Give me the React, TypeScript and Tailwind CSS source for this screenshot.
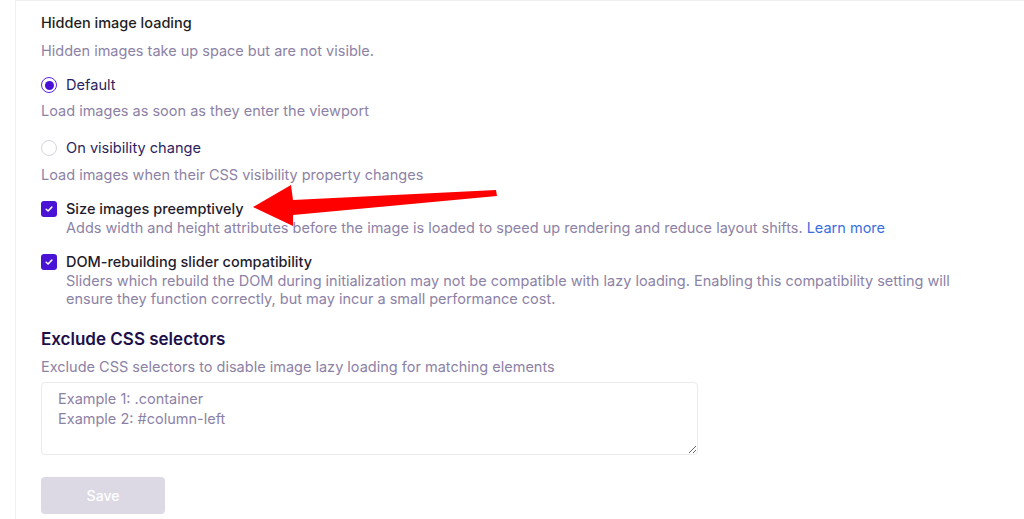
import React from 'react'

const desc = 'text-[14.5px] leading-[20px] text-[#8c82a6]'

function Radio({ checked }: { checked?: boolean }) {
  return checked ? (
    <span className="flex h-4 w-4 shrink-0 items-center justify-center rounded-full border-[1.5px] border-[#5a24e6] bg-white">
      <span className="h-[9px] w-[9px] rounded-full bg-[#4a0fd6]" />
    </span>
  ) : (
    <span className="h-4 w-4 shrink-0 rounded-full border border-[#d6d2de] bg-white" />
  )
}

function Checkbox() {
  return (
    <span className="flex h-4 w-4 shrink-0 items-center justify-center rounded-[3px] bg-[#4a12d4]">
      <svg viewBox="0 0 16 16" className="h-[10px] w-[10px]" fill="none" stroke="white" strokeWidth="2.4" strokeLinecap="round" strokeLinejoin="round">
        <path d="M3.5 8.5l3 2.8 6-6.3" />
      </svg>
    </span>
  )
}

export default function App() {
  return (
    <div className="relative h-[519px] w-[1024px] overflow-hidden bg-white font-['Inter',sans-serif]">
      <div className="ml-[15px] h-full border-l border-t border-[#efeff2] pl-[25px] pt-[12px]">
        <div className="flex flex-col items-start">
          <h3 className="text-[14.5px] font-medium leading-[20px] text-[#1d1d22]">Hidden image loading</h3>
          <p className={`mt-[8px] ${desc}`}>Hidden images take up space but are not visible.</p>

          <label className="mt-[14px] flex items-center gap-[9px]">
            <Radio checked />
            <span className="text-[14.6px] leading-[20px] text-[#2c1f5e]">Default</span>
          </label>
          <p className={`mt-[6px] ${desc}`}>Load images as soon as they enter the viewport</p>

          <label className="mt-[17px] flex items-center gap-[9px]">
            <Radio />
            <span className="text-[14.6px] leading-[20px] text-[#2c1f5e]">On visibility change</span>
          </label>
          <p className={`mt-[7px] ${desc}`}>Load images when their CSS visibility property changes</p>

          <div className="mt-[14px] flex items-start gap-[9px]">
            <span className="pt-[2px]">
              <Checkbox />
            </span>
            <div>
              <p className="text-[14.5px] font-medium leading-[20px] text-[#1e1b2c]">Size images preemptively</p>
              <p className="text-[14.5px] leading-[18px] text-[#8c82a6]">
                Adds width and height attributes before the image is loaded to speed up rendering and reduce layout shifts.{' '}
                <a className="text-[#3b6ee0]">Learn more</a>
              </p>
            </div>
          </div>

          <div className="mt-[15px] flex items-start gap-[9px]">
            <span className="pt-[2px]">
              <Checkbox />
            </span>
            <div className="w-[900px]">
              <p className="text-[14.5px] font-medium leading-[20px] text-[#1e1b2c]">DOM-rebuilding slider compatibility</p>
              <p className="text-[14.5px] leading-[18px] text-[#8c82a6]">
                Sliders which rebuild the DOM during initialization may not be compatible with lazy loading. Enabling this compatibility setting will ensure they function correctly, but may incur a small performance cost.
              </p>
            </div>
          </div>

          <h2 className="mt-[19px] text-[17px] font-semibold leading-[24px] text-[#1c0f4a]">Exclude CSS selectors</h2>
          <p className={`mt-[6px] ${desc}`}>Exclude CSS selectors to disable image lazy loading for matching elements</p>

          <textarea
            className="mt-[5px] h-[73px] w-[657px] rounded-[4px] border border-[#ebe9ef] px-[16px] pt-[6px] text-[14.5px] leading-[20px] text-[#2c1f5e] outline-none placeholder:text-[#8c82a6]"
            placeholder={'Example 1: .container\nExample 2: #column-left'}
          />

          <button className="mt-[22px] h-[37px] w-[124px] rounded-[4px] bg-[#dcd9e4] text-[14px] font-medium text-white">Save</button>
        </div>
      </div>

      <svg className="pointer-events-none absolute left-0 top-0" width="1024" height="519" viewBox="0 0 1024 519">
        <polygon points="496,190 497,196 293,215 293,226 253,207 291,185 293,200" fill="#ff0000" />
      </svg>
    </div>
  )
}
